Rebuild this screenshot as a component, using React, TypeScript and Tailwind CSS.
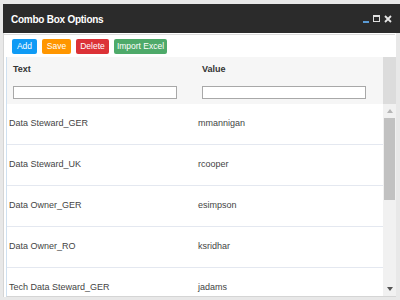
import React from 'react';

type Row = { text: string; value: string };

const rows: Row[] = [
  { text: 'Data Steward_GER', value: 'mmannigan' },
  { text: 'Data Steward_UK', value: 'rcooper' },
  { text: 'Data Owner_GER', value: 'esimpson' },
  { text: 'Data Owner_RO', value: 'ksridhar' },
  { text: 'Tech Data Steward_GER', value: 'jadams' },
];

const font = { fontFamily: '"Liberation Sans", Arial, sans-serif' };

function WindowControls(): JSX.Element {
  return (
    <div className="flex items-center gap-[4px] pr-[8px]">
      <div className="w-[6px] h-[2px] bg-[#5b9bd5] mt-[6px]" />
      <div className="w-[7px] h-[7px] border border-[#e0e0e0] border-t-2" />
      <svg width="8" height="8" viewBox="0 0 8 8">
        <path d="M1 1 L7 7 M7 1 L1 7" stroke="#e6e6e6" strokeWidth="1.8" />
      </svg>
    </div>
  );
}

function Toolbar(): JSX.Element {
  const btn = 'h-[15px] rounded-[2px] text-white text-[8.5px] leading-[15px] whitespace-nowrap text-center';
  return (
    <div className="shrink-0 flex gap-[5px] pl-[8px] pt-[4px] h-[22px]">
      <button className={`${btn} w-[25px] bg-[#0f9bf5]`}>Add</button>
      <button className={`${btn} w-[29px] bg-[#ff9600]`}>Save</button>
      <button className={`${btn} w-[33px] bg-[#dc3237]`}>Delete</button>
      <button className={`${btn} w-[53px] bg-[#4eaa6a]`}>Import Excel</button>
    </div>
  );
}

function Scrollbar(): JSX.Element {
  return (
    <div className="w-[13px] shrink-0 bg-[#f1f1f1] flex flex-col items-center">
      <div className="h-[47px] shrink-0 w-full bg-[#dcdcdc]" />
      <div className="h-[14px] shrink-0 flex items-center">
        <svg width="6" height="4" viewBox="0 0 6 4">
          <path d="M0 4 L3 0 L6 4 Z" fill="#b5b5b5" />
        </svg>
      </div>
      <div className="w-[11px] h-[82px] shrink-0 bg-[#c1c1c1]" />
      <div className="flex-1" />
      <div className="h-[14px] shrink-0 flex items-center">
        <svg width="6" height="4" viewBox="0 0 6 4">
          <path d="M0 0 L6 0 L3 4 Z" fill="#555" />
        </svg>
      </div>
    </div>
  );
}

export default function App(): JSX.Element {
  return (
    <div className="w-[400px] h-[300px] bg-[#e8e8e8] pt-[4px] pl-[3px] overflow-hidden" style={font}>
      <div className="w-[397px] h-[293px] flex flex-col">
        <div className="h-[29px] shrink-0 bg-[#2b2b2b] flex items-center justify-between">
          <span className="pl-[8px] pt-[2px] text-white font-bold text-[10px] tracking-[-0.25px]">
            Combo Box Options
          </span>
          <WindowControls />
        </div>
        <div className="flex-1 min-h-0 flex flex-col bg-white w-[393px] border-l border-[#d5d5d5]">
          <div className="shrink-0 mt-[1px] h-[1px] bg-[#dcdcdc] mr-[1px]" />
          <Toolbar />
          <div className="flex-1 min-h-0 flex ml-[2px] border-l border-[#cfe0f0] border-b border-b-[#d5d5d5] overflow-hidden">
            <div className="w-[376px] flex flex-col">
              <div className="h-[47px] shrink-0 bg-[#f6f6f6] flex">
                <div className="w-[188px] pl-[6px] pt-[7px]">
                  <div className="text-[9px] font-bold text-[#333] leading-[11px]">Text</div>
                  <div className="mt-[11px] w-[164px] h-[13px] bg-white border border-[#a8a8a8]" />
                </div>
                <div className="w-[188px] pl-[7px] pt-[7px]">
                  <div className="text-[9px] font-bold text-[#333] leading-[11px]">Value</div>
                  <div className="mt-[11px] w-[164px] h-[13px] bg-white border border-[#a8a8a8]" />
                </div>
              </div>
              {rows.map(r => (
                <div key={r.text} className="h-[41px] shrink-0 flex items-center border-b border-[#e4e8f0] text-[9px] text-[#444]">
                  <div className="w-[191px] pl-[2px]">{r.text}</div>
                  <div className="w-[185px]">{r.value}</div>
                </div>
              ))}
            </div>
            <Scrollbar />
          </div>
        </div>
      </div>
    </div>
  );
}
